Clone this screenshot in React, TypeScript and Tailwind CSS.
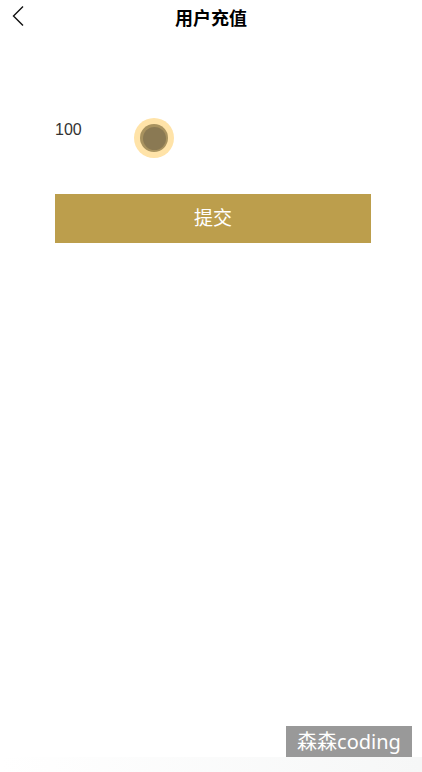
export default function App() {
  return (
    <div
      className="relative w-[422px] h-[772px] bg-white overflow-hidden"
      style={{ fontFamily: '"Noto Sans", "Noto Sans CJK SC", sans-serif' }}
    >
      {/* Header */}
      <div className="relative h-[37px] flex items-center justify-center">
        <svg
          className="absolute left-[11px] top-[5px]"
          width="14"
          height="22"
          viewBox="0 0 14 22"
          fill="none"
        >
          <path d="M12 1.5 L2.5 11 L12 20.5" stroke="#111" strokeWidth="1.4" />
        </svg>
        <span className="text-[18px] font-bold text-black">用户充值</span>
      </div>

      {/* Amount row */}
      <div className="mt-[81px] pl-[55px] flex items-center h-[40px]">
        <span
          className="text-[16px] text-[#333] w-[79px] -mt-[17px]"
          style={{ fontFamily: '"Liberation Sans", Arial, sans-serif' }}
        >
          100
        </span>
        <div className="w-[40px] h-[40px] rounded-full bg-[#ffe3a8] flex items-center justify-center">
          <div className="w-[28px] h-[28px] rounded-full bg-[#a8925f] flex items-center justify-center">
            <div className="w-[23px] h-[23px] rounded-full bg-[#8a7953]" />
          </div>
        </div>
      </div>

      {/* Submit */}
      <div className="mt-[36px] px-[55px] pr-[51px]">
        <button className="w-full h-[49px] bg-[#bc9e4c] text-white text-[19px] flex items-center justify-center">
          提交
        </button>
      </div>

      {/* Watermark */}
      <div className="absolute left-[286px] top-[726px] w-[126px] h-[31px] bg-[#999999] flex items-center justify-center text-white text-[20px] leading-none">
        森森coding
      </div>
      <div className="absolute left-0 bottom-0 w-full h-[15px] bg-gradient-to-r from-white to-[#f6f7f7]" />
    </div>
  );
}
